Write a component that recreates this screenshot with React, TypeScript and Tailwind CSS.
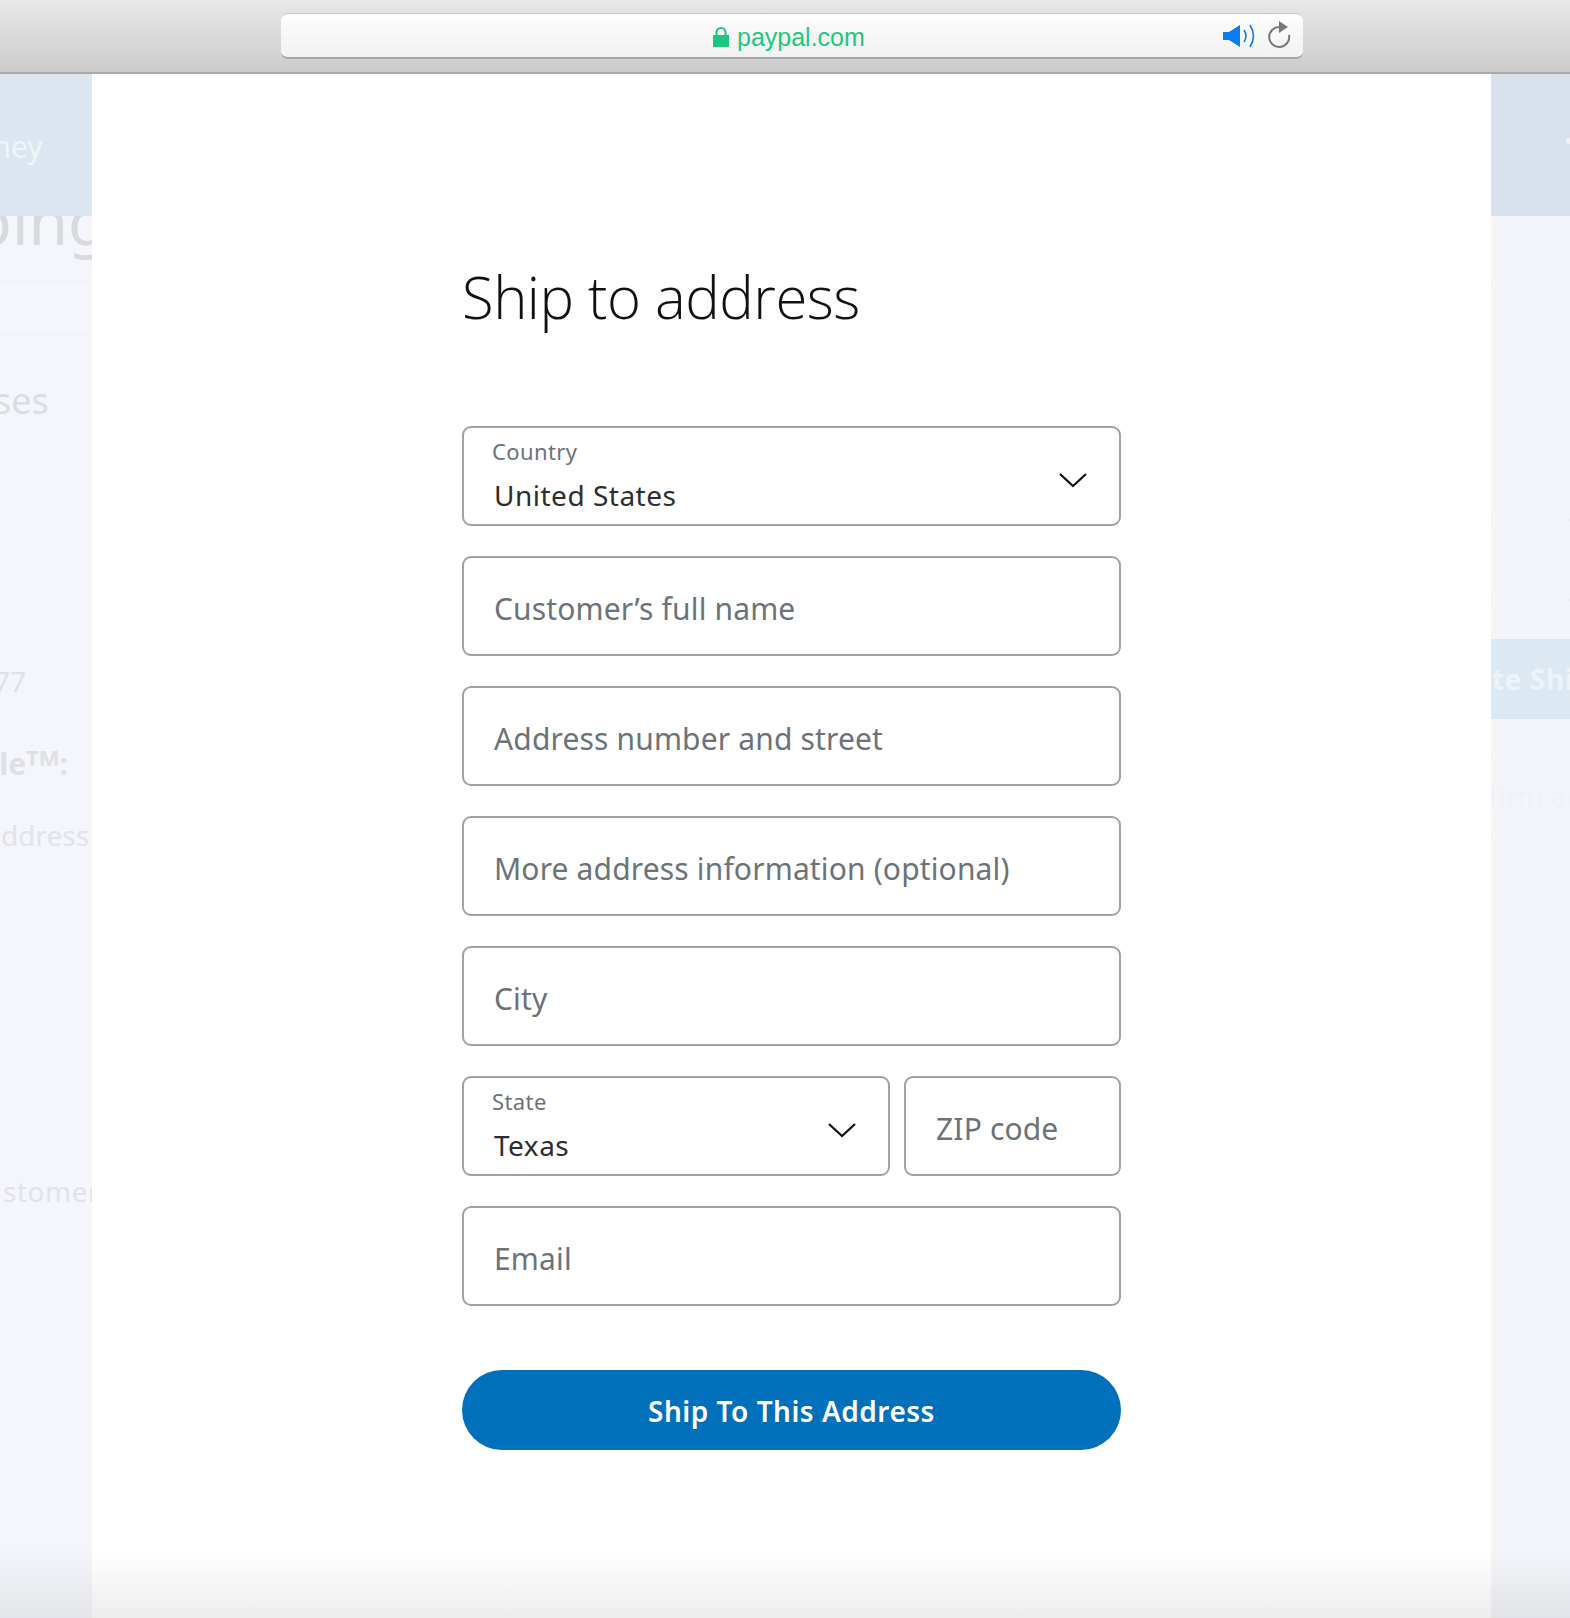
// App.tsx
// Ship to address modal over a faded page, with a browser address bar on top.

const FORM_FONT = "font-['Noto_Sans','Open_Sans',sans-serif]";

const Chevron = () => (
  <svg width="30" height="16" viewBox="0 0 30 16" fill="none" className="shrink-0 mt-[8px]">
    <path d="M2 2 L15 14 L28 2" stroke="#111" strokeWidth="2.2" />
  </svg>
);

function SelectField({ label, value, className }: { label: string; value: string; className: string }) {
  return (
    <div className={`h-[100px] border-2 border-[#9da3a6] rounded-[9px] flex items-center justify-between pl-[30px] pr-[31px] ${className}`}>
      <div className="flex flex-col pb-[3px]">
        <span className="text-[22px] leading-[30px] text-[#6c7378] -ml-[2px] tracking-[0.4px]">{label}</span>
        <span className="text-[28px] leading-[38px] mt-[10px] text-[#2c2e2f] tracking-[0.5px]">{value}</span>
      </div>
      <Chevron />
    </div>
  );
}

function InputField({ placeholder, className = "w-full" }: { placeholder: string; className?: string }) {
  return (
    <div className={`h-[100px] border-2 border-[#9da3a6] rounded-[9px] flex items-center pl-[30px] ${className}`}>
      <span className="text-[30px] leading-[38px] mt-[6px] text-[#6c7378] tracking-[0.15px] whitespace-nowrap">{placeholder}</span>
    </div>
  );
}

function BrowserBar() {
  return (
    <div className="h-[74px] shrink-0 bg-gradient-to-b from-[#e8e8e8] to-[#cccccc] border-b-2 border-[#a9a9a9] pt-[13px] pl-[281px]">
      <div className="w-[1022px] h-[46px] rounded-[7px] bg-gradient-to-b from-[#fdfdfd] to-[#f2f2f2] border-t border-[#c4c4c4] border-b-2 border-b-[#a5a5a5] flex items-center">
        <svg width="16" height="20" viewBox="0 0 16 20" className="ml-[432px] mt-[2px]">
          <path d="M3.5 9 V5.5 a4.5 4.5 0 0 1 9 0 V9" fill="none" stroke="#1bc67e" strokeWidth="2" />
          <rect x="0" y="8" width="16" height="12" fill="#1bc67e" />
        </svg>
        <span className="ml-[8px] text-[25px] leading-[30px] mt-[2px] text-[#1dc97f] font-['Liberation_Sans',sans-serif]">paypal.com</span>
        <svg width="33" height="24" viewBox="0 0 33 24" fill="none" className="ml-[358px]">
          <path d="M0 8 H6 L17 1 V23 L6 16 H0 Z" fill="#0a7cf2" />
          <path d="M21 6 Q25 12 21 18" stroke="#0a7cf2" strokeWidth="1.6" />
          <path d="M27 1 Q34 12 27 23" stroke="#0a7cf2" strokeWidth="1.6" />
        </svg>
        <svg width="24" height="28" viewBox="0 0 24 28" fill="none" className="ml-[11px] -mt-[1px]">
          <path d="M13 6 A10 10 0 1 0 22 14" stroke="#777" strokeWidth="2" />
          <path d="M12 0 L21 6 L12 12 Z" fill="#777" />
        </svg>
      </div>
    </div>
  );
}

function LeftSide() {
  return (
    <div className={`w-[92px] shrink-0 bg-[#f4f6fb] overflow-hidden flex flex-col ${FORM_FONT}`}>
      <div className="relative z-10 h-[142px] shrink-0 bg-[#dce6f0] flex items-center pt-[2px]">
        <span className="ml-[-132px] w-[166px] text-right text-[30px] text-[#f1f5f9] whitespace-nowrap">Send money</span>
      </div>
      <div className="h-[66px] shrink-0 border-b border-[#eff0f4] overflow-visible">
        <div className="ml-[-158px] w-[247px] -mt-[30px] text-right text-[64px] leading-[70px] text-[#d9dadd] whitespace-nowrap">Shipping</div>
      </div>
      <div className="h-[53px] shrink-0 border-b border-[#eff0f4]" />
      <div className="mt-[42px] ml-[-125px] w-[162px] text-right text-[36px] leading-[48px] text-[#dcdde2] whitespace-nowrap">Addresses</div>
      <div className="mt-[238px] ml-[-50px] w-[76px] text-right text-[28px] leading-[36px] text-[#e0e1e6] whitespace-nowrap">1177</div>
      <div className="mt-[45px] ml-[-100px] w-[168px] text-right text-[30px] leading-[40px] font-bold text-[#dfe0e5] whitespace-nowrap">
        Handle<span className="relative -top-[9px] text-[22px] leading-none">TM</span>:
      </div>
      <div className="mt-[33px] ml-[1px] text-[28px] leading-[36px] text-[#e2e3e8] whitespace-nowrap">ddress</div>
      <div className="mt-[320px] ml-[3px] text-[28px] leading-[36px] text-[#e2e3e8] tracking-[0.5px] whitespace-nowrap">stomer name</div>
    </div>
  );
}

function RightSide() {
  return (
    <div className={`flex-1 bg-[#f3f5fa] overflow-hidden flex flex-col ${FORM_FONT}`}>
      <div className="h-[142px] shrink-0 bg-[#d9e1ec] flex items-center justify-end pb-[8px]">
        <span className="w-[4px] h-[6px] rounded-l-full bg-[#eef1f6]" />
      </div>
      <div className="h-[67px] shrink-0 border-b border-[#eff1f6]" />
      <div className="h-[238px] shrink-0 border-b-2 border-dotted border-[#eceef3]" />
      <div className="h-[80px] shrink-0 border-b-2 border-dotted border-[#eceef3]" />
      <div className="mt-[38px] h-[80px] shrink-0 bg-[#dce8f2] overflow-hidden flex items-center">
        <span className="ml-[-104px] text-[28px] font-bold text-[#eef3f8] tracking-[0.6px] whitespace-nowrap">Calculate Shipping</span>
      </div>
      <div className="h-[39px] shrink-0 border-b border-[#eff1f6]" />
      <div className="h-[77px] shrink-0 border-b border-[#eff1f6] flex items-center">
        <span className="ml-[-54px] text-[28px] text-[#f0f2f7] whitespace-nowrap">Confirm address</span>
      </div>
    </div>
  );
}

export default function App() {
  return (
    <div className="relative w-full h-[1618px] overflow-hidden flex flex-col bg-white">
      <BrowserBar />
      <div className="flex-1 flex">
        <LeftSide />
        <div className={`w-[1399px] shrink-0 bg-white flex justify-center ${FORM_FONT}`}>
          <div className="w-[659px] flex flex-col">
            <h1 className="mt-[187px] text-[58px] leading-[72px] font-light text-[#111] font-['Open_Sans',sans-serif] tracking-[-0.5px] whitespace-nowrap">
              Ship to address
            </h1>
            <div className="mt-[93px] flex flex-col gap-[30px]">
              <SelectField label="Country" value="United States" className="w-full" />
              <InputField placeholder="Customer’s full name" />
              <InputField placeholder="Address number and street" />
              <InputField placeholder="More address information (optional)" />
              <InputField placeholder="City" />
              <div className="flex gap-[14px]">
                <SelectField label="State" value="Texas" className="w-[428px]" />
                <InputField placeholder="ZIP code" className="flex-1" />
              </div>
              <InputField placeholder="Email" />
            </div>
            <button className="mt-[64px] h-[80px] pt-[2px] rounded-full bg-[#0070ba] text-white text-[28px] font-semibold tracking-[0.5px]">
              Ship To This Address
            </button>
          </div>
        </div>
        <RightSide />
      </div>
      {/* soft shade along the bottom edge */}
      <div className="absolute left-0 right-0 bottom-0 h-[70px] bg-gradient-to-b from-transparent to-black/[0.07] pointer-events-none" />
    </div>
  );
}
